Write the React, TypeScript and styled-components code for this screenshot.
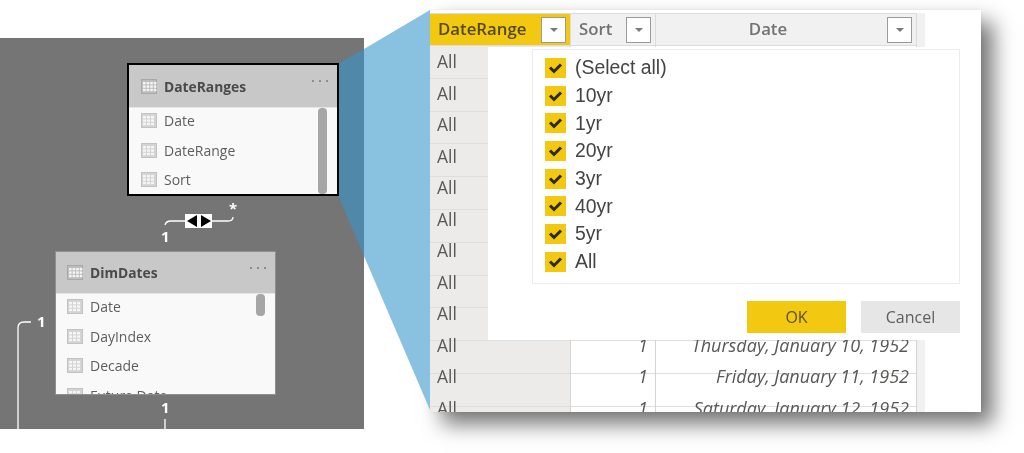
import React from "react";
import styled, { createGlobalStyle } from "styled-components";

const GlobalStyle = createGlobalStyle`
  html, body {
    margin: 0;
    padding: 0;
    background: #fff;
    font-family: "Open Sans", "Noto Sans", sans-serif;
  }
`;

const Stage = styled.div`
  position: relative;
  display: flex;
  align-items: flex-start;
  width: 1024px;
  height: 453px;
  overflow: hidden;
  filter: blur(0.35px);
`;

const Canvas = styled.section`
  position: relative;
  flex: none;
  width: 364px;
  height: 391px;
  margin-top: 38px;
  background: #757575;
`;

const Wedge = styled.svg`
  position: absolute;
  left: 0;
  top: 0;
  width: 440px;
  height: 453px;
`;

const Links = styled.svg`
  position: absolute;
  left: 0;
  top: 0;
  width: 364px;
  height: 391px;
`;

const LinkLabel = styled.span<{ $x: number; $y: number }>`
  position: absolute;
  left: ${(p) => p.$x}px;
  top: ${(p) => p.$y}px;
  color: #fff;
  font-size: 15px;
  font-weight: 700;
  line-height: 16px;
`;

const ArrowBox = styled.div`
  position: absolute;
  left: 185px;
  top: 176px;
  width: 27px;
  height: 14px;
  background: #fff;
  display: flex;
  align-items: center;
  justify-content: center;
  gap: 4px;
`;

const Arrow = styled.span<{ $dir: "left" | "right" }>`
  flex: none;
  width: 0;
  height: 0;
  border-top: 6px solid transparent;
  border-bottom: 6px solid transparent;
  ${(p) =>
    p.$dir === "left" ? "border-right: 10px solid #000;" : "border-left: 10px solid #000;"}
`;

const TableCard = styled.div<{ $x: number; $y: number; $w: number; $h: number; $selected?: boolean }>`
  --pad: ${(p) => (p.$selected ? "12px" : "11px")};
  position: absolute;
  left: ${(p) => p.$x}px;
  top: ${(p) => p.$y}px;
  width: ${(p) => p.$w}px;
  height: ${(p) => p.$h}px;
  box-sizing: border-box;
  background: #f9f9f9;
  overflow: hidden;
  display: flex;
  flex-direction: column;
  border: ${(p) => (p.$selected ? "2px solid #000" : "1px solid #8f8f8f")};
`;

const CardHead = styled.div<{ $h: number }>`
  flex: none;
  height: ${(p) => p.$h}px;
  background: #c8c8c8;
  border-bottom: 1px solid #e6e6e6;
  box-sizing: border-box;
  display: flex;
  align-items: center;
  padding-left: var(--pad);
  gap: 7px;
  position: relative;
`;

const CardTitle = styled.span`
  font-size: 13.8px;
  font-weight: 700;
  color: #4a4a4a;
`;

const Dots = styled.span`
  position: absolute;
  right: 9px;
  top: 15px;
  display: flex;
  gap: 5px;
  & i {
    width: 2px;
    height: 2px;
    background: #8c8c8c;
  }
`;

const CardBody = styled.div`
  position: relative;
  flex: 1;
  padding: 0 0 0 var(--pad);
`;

const FieldRow = styled.div`
  height: 29.6px;
  display: flex;
  align-items: center;
  gap: 7px;
  font-size: 14px;
  color: #605e5c;
  white-space: nowrap;
  position: relative;
  top: -2px;
`;

const Thumb = styled.div<{ $h: number; $right: number }>`
  position: absolute;
  right: ${(p) => p.$right}px;
  top: 0;
  width: 9px;
  height: ${(p) => p.$h}px;
  border-radius: 4px;
  background: #a6a6a6;
`;

const Callout = styled.section`
  position: relative;
  flex: none;
  width: 551px;
  height: 402px;
  margin: 10px 0 0 66px;
  padding-top: 3px;
  box-sizing: border-box;
  background: #fff;
  overflow: hidden;
`;

const Frame = styled.div`
  position: absolute;
  left: 430px;
  top: 10px;
  width: 551px;
  height: 402px;
  box-shadow: 12px 12px 20px rgba(0, 0, 0, 0.55), 0 0 6px rgba(0, 0, 0, 0.06);
`;

const Sheet = styled.div`
  width: 495px;
  background: #f1f1f1;
  height: 100%;
`;

const HeaderRow = styled.div`
  display: grid;
  grid-template-columns: 141px 85px 261px;
  width: 487px;
  height: 33px;
  box-sizing: border-box;
  border-top: 1px solid #dcdcdc;
  border-bottom: 1px solid #dcdcdc;
`;

const HeadCell = styled.div<{ $active?: boolean; $center?: boolean }>`
  position: relative;
  display: flex;
  align-items: center;
  justify-content: ${(p) => (p.$center ? "center" : "flex-start")};
  box-sizing: border-box;
  padding: ${(p) => (p.$center ? "0 36px 2px 0" : "0 0 2px 8px")};
  font-size: 16.8px;
  font-weight: 600;
  color: ${(p) => (p.$active ? "#54491c" : "#727272")};
  background: ${(p) => (p.$active ? "#f2c811" : "#f1f1f1")};
  border-right: 1px solid #dcdcdc;
`;

const FilterButton = styled.span`
  position: absolute;
  right: 4px;
  top: 3px;
  width: 25px;
  height: 26px;
  box-sizing: border-box;
  background: #fff;
  border: 1.5px solid #9a9a9a;
  display: flex;
  align-items: center;
  justify-content: center;
  &::after {
    content: "";
    border-top: 4px solid #7a7a7a;
    border-left: 4.5px solid transparent;
    border-right: 4.5px solid transparent;
  }
`;

const Body = styled.div`
  width: 487px;
  height: 366px;
  overflow: hidden;
  background:
    repeating-linear-gradient(to bottom, transparent 0 31.8px, #dedede 31.8px 32.8px),
    linear-gradient(to right, #ecebea 140px, #fff 140px);
`;

const DataRow = styled.div`
  display: grid;
  grid-template-columns: 141px 85px 261px;
  height: 31.5px;
  font-size: 17.5px;
  color: #5a5856;
`;

const DataCell = styled.div<{ $align?: string }>`
  display: flex;
  align-items: center;
  justify-content: ${(p) => p.$align || "flex-start"};
  box-sizing: border-box;
  padding: 0 7px 1px;
  border-right: 1px solid #d4d4d4;
  font-style: ${(p) => (p.$align ? "italic" : "normal")};
  font-size: ${(p) => (p.$align ? "18px" : "inherit")};
  white-space: nowrap;
`;

const Dialog = styled.div`
  position: absolute;
  left: 58px;
  top: 37px;
  width: 493px;
  height: 293px;
  background: #fff;
  box-sizing: border-box;
  padding: 2px 21px 0 44px;
  font-family: "Liberation Sans", Arial, sans-serif;
`;

const OptionList = styled.div`
  height: 235px;
  box-sizing: border-box;
  border: 1px solid #ececec;
  padding: 4px 0 0 12px;
`;

const Option = styled.label`
  display: flex;
  align-items: center;
  gap: 9px;
  height: 27.7px;
  font-size: 19.4px;
  color: #444;
`;

const CheckBox = styled.span`
  flex: none;
  width: 21px;
  height: 20px;
  background: #f2c811;
  display: flex;
  align-items: center;
  justify-content: center;
`;

const Actions = styled.div`
  display: flex;
  justify-content: flex-end;
  gap: 15px;
  margin-top: 17px;
`;

const DialogButton = styled.button<{ $primary?: boolean }>`
  width: 99px;
  height: 32px;
  border: 0;
  padding: 0;
  font-family: "Open Sans", sans-serif;
  font-size: 16px;
  color: ${(p) => (p.$primary ? "#5c5020" : "#605e5c")};
  background: ${(p) => (p.$primary ? "#f2c811" : "#e6e6e6")};
`;

const GridIcon: React.FC<{ head?: boolean }> = ({ head }) => (
  <svg width="16" height="15" viewBox="0 0 16 15" style={{ flex: "none" }}>
    <rect width="16" height="15" fill={head ? "#a8a8a8" : "#c2c2c2"} />
    <rect x="1" y="1" width="14" height="13" fill={head ? "#bdbdbd" : "#d4d4d4"} />
    {[0, 1, 2].map((r) =>
      [0, 1, 2, 3].map((c) => {
        if (!head && c === 3) return null;
        const w = head ? 2.6 : 3;
        return (
          <rect
            key={`${r}-${c}`}
            x={2 + c * (w + 1)}
            y={3 + r * 3.4}
            width={w}
            height="2.4"
            fill="#f6f6f6"
          />
        );
      })
    )}
  </svg>
);

const Check: React.FC = () => (
  <svg width="15" height="12" viewBox="0 0 15 12">
    <path d="M2 5.5 L6 9.5 L13 2.5" fill="none" stroke="#2b2b1a" strokeWidth="3" />
  </svg>
);

const options = ["(Select all)", "10yr", "1yr", "20yr", "3yr", "40yr", "5yr", "All"];

const dayNames = ["Monday", "Tuesday", "Wednesday", "Thursday", "Friday", "Saturday", "Sunday"];
const rows = Array.from({ length: 12 }, (_, i) => ({
  range: "All",
  sort: 1,
  date: `${dayNames[(i + 1) % 7]}, January ${i + 1}, 1952`,
}));

const App: React.FC = () => {
  return (
    <>
      <GlobalStyle />
      <Stage>
        <Frame />
        <Canvas>
          <Links viewBox="0 0 364 391">
            <g fill="none" stroke="#fff" strokeWidth="1.3">
              <path d="M165 187 q1 -4 6 -4 h14 M212 183 h16 q5 0 5 -4" />
              <path d="M18 391 V290 q0 -6 6 -6 h7" />
              <path d="M165 381 V391" />
            </g>
          </Links>
          <LinkLabel $x={161} $y={190}>1</LinkLabel>
          <LinkLabel $x={229} $y={162}>*</LinkLabel>
          <LinkLabel $x={37} $y={275}>1</LinkLabel>
          <LinkLabel $x={161} $y={361}>1</LinkLabel>
          <ArrowBox>
            <Arrow $dir="left" />
            <Arrow $dir="right" />
          </ArrowBox>
        </Canvas>
        <Wedge viewBox="0 0 440 453">
          <polygon points="364,49 430,10 430,410 364,256" fill="#89c2e0" />
          <polygon points="338,64 364,49 364,256 338,195" fill="#4f88a9" />
        </Wedge>
        <TableCard $x={127} $y={63} $w={212} $h={133} $selected>
          <CardHead $h={43}>
            <GridIcon head />
            <CardTitle>DateRanges</CardTitle>
            <Dots><i /><i /><i /></Dots>
          </CardHead>
          <CardBody>
            <FieldRow><GridIcon />Date</FieldRow>
            <FieldRow><GridIcon />DateRange</FieldRow>
            <FieldRow><GridIcon />Sort</FieldRow>
            <Thumb $h={86} $right={10} />
          </CardBody>
        </TableCard>
        <TableCard $x={55} $y={251} $w={221} $h={144}>
          <CardHead $h={42}>
            <GridIcon head />
            <CardTitle>DimDates</CardTitle>
            <Dots><i /><i /><i /></Dots>
          </CardHead>
          <CardBody>
            <FieldRow><GridIcon />Date</FieldRow>
            <FieldRow><GridIcon />DayIndex</FieldRow>
            <FieldRow><GridIcon />Decade</FieldRow>
            <FieldRow><GridIcon />Future Date</FieldRow>
            <Thumb $h={22} $right={10} />
          </CardBody>
        </TableCard>
        <Callout>
          <Sheet>
            <HeaderRow>
              <HeadCell $active>DateRange<FilterButton /></HeadCell>
              <HeadCell>Sort<FilterButton /></HeadCell>
              <HeadCell $center>Date<FilterButton /></HeadCell>
            </HeaderRow>
            <Body>
              {rows.map((row) => (
                <DataRow key={row.date}>
                  <DataCell>{row.range}</DataCell>
                  <DataCell $align="flex-end">{row.sort}</DataCell>
                  <DataCell $align="flex-end">{row.date}</DataCell>
                </DataRow>
              ))}
            </Body>
          </Sheet>
          <Dialog>
            <OptionList>
              {options.map((label) => (
                <Option key={label}>
                  <CheckBox><Check /></CheckBox>
                  {label}
                </Option>
              ))}
            </OptionList>
            <Actions>
              <DialogButton $primary>OK</DialogButton>
              <DialogButton>Cancel</DialogButton>
            </Actions>
          </Dialog>
        </Callout>
      </Stage>
    </>
  );
};

export default App;
